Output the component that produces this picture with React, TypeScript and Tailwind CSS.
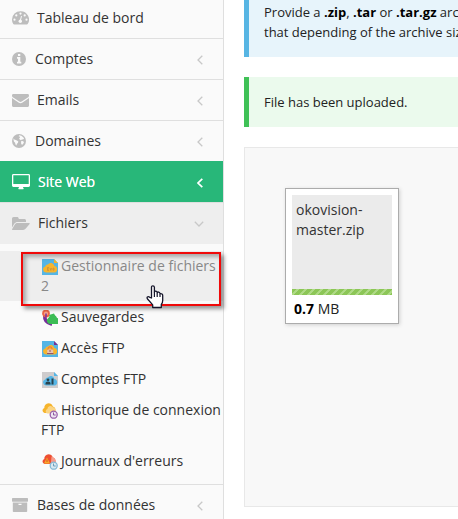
import type { ReactNode } from "react";

const iconClass = "shrink-0 block";

function Gauge() {
  return (
    <svg className={iconClass} width="17" height="14" viewBox="0 0 17 14">
      <path fill="#bdbdbd" d="M8.5.2A8.4 8.4 0 0 0 0 8.5c0 1.700.5 3.200 1.300 4.500.2.300.4.400.7.400h13c.3 0 .5-.1.700-.4A8.300 8.300 0 0 0 8.500.2z" />
      <g fill="#fafafa">
        <circle cx="2.500" cy="8.700" r="1.100" /><circle cx="4.300" cy="4.400" r="1.100" />
        <circle cx="8.500" cy="2.600" r="1.100" /><circle cx="12.700" cy="4.400" r="1.100" />
        <circle cx="14.500" cy="8.700" r="1.100" /><circle cx="8.300" cy="10.300" r="1.700" />
      </g>
      <path d="M8.400 9.500l1-4.100" stroke="#fafafa" strokeWidth="1" strokeLinecap="round" />
    </svg>
  );
}
function Info() {
  return (
    <svg className={iconClass} width="14" height="14" viewBox="0 0 14 14">
      <circle cx="7" cy="7" r="7" fill="#bdbdbd" />
      <path fill="#fafafa" d="M6 2h2.300v2H6zM5 5h3.300v4.800h1V11.500H5V9.800h1V6.700H5z" />
    </svg>
  );
}
function Mail() {
  return (
    <svg className={iconClass} width="17" height="13" viewBox="0 0 17 13">
      <path fill="#bdbdbd" d="M0 1.400C0 .6.6 0 1.400 0h14.200c.8 0 1.400.6 1.400 1.400 0 .9-.5 1.600-1.200 2.100L9.700 7.600c-.8.5-1.600.5-2.400 0L1.200 3.500C.5 3 0 2.300 0 1.400zM0 4c2 1.600 4.300 3.100 6.500 4.600 1.300.9 2.700.9 4 0C12.700 7.100 15 5.600 17 4v7.500c0 .8-.7 1.500-1.500 1.500h-14C.7 13 0 12.300 0 11.500z" />
    </svg>
  );
}
function Globe() {
  return (
    <svg className={iconClass} width="14" height="14" viewBox="0 0 14 14">
      <circle cx="7" cy="7" r="7" fill="#bdbdbd" />
      <path fill="#fafafa" d="M7.300 1.200l2 .5 1.900 1.500.9 1.400-1 1-1.300-.2-.8.900-1.300-.7-.6-1.300 1-.8-.5-.9-1-.3z" />
      <path fill="#fafafa" d="M1.300 4.300l1 1.300 1.500.4 1.500.7 1 .9-.3 1.200-1.200 1.100-.3 1.500-1-.9-.4-1.700-1.200-1.200z" />
      <path fill="#fafafa" d="M9 7.300l1.600-.3 1.400 1-.8 1.700-1.200 1.200-.8-1.400z" />
    </svg>
  );
}
function Desktop() {
  return (
    <svg className={iconClass} width="18" height="16" viewBox="0 0 18 16">
      <path fill="#fff" fillRule="evenodd" d="M1.400 0h15.200c.8 0 1.400.6 1.400 1.400v10.200c0 .8-.6 1.400-1.400 1.400H11c0 .8.700 1.100.7 1.700 0 .3-.2.500-.5.500H6.800c-.3 0-.5-.2-.5-.5 0-.6.700-.9.700-1.700H1.400C.6 13 0 12.400 0 11.600V1.400C0 .6.6 0 1.400 0zM1.300 1.300V10h15.400V1.300z" />
    </svg>
  );
}
function FolderOpen() {
  return (
    <svg className={iconClass} width="18" height="13" viewBox="0 0 18 13">
      <path fill="#bdbdbd" d="M0 10.500V1.700C0 .8.700 0 1.700 0h3.400c.9 0 1.600.7 1.600 1.600v.5h5.700c.9 0 1.600.7 1.600 1.600V5H5.500c-1.100 0-2.400.6-3.100 1.500z" />
      <path fill="#bdbdbd" d="M5.500 6h11.600c.6 0 .9.500.5 1l-3.800 4.600c-.6.800-1.700 1.400-2.700 1.400H.8c-.7 0-1-.5-.6-1L3 7.300C3.600 6.500 4.700 6 5.500 6z" />
    </svg>
  );
}
function Archive() {
  return (
    <svg className={iconClass} width="16" height="14" viewBox="0 0 16 14">
      <rect width="16" height="3.700" rx=".6" fill="#bdbdbd" />
      <path fill="#bdbdbd" fillRule="evenodd" d="M.8 4.500h14.400v8.700c0 .5-.3.800-.8.800H1.600c-.5 0-.8-.3-.8-.8zM6.500 5.800v1.100h3V5.800z" />
    </svg>
  );
}

function Chevron({ color = "#c8c8c8", down = false }: { color?: string; down?: boolean }) {
  return down ? (
    <svg className="mr-[19px] mt-[2px] block" width="10" height="6" viewBox="0 0 10 6" fill="none">
      <path d="M.8.8L5 5 9.200.8" stroke={color} strokeWidth="1.300" />
    </svg>
  ) : (
    <svg className="mr-[20px] mt-[2px] block" width="6" height="10" viewBox="0 0 6 10" fill="none">
      <path d="M5.300.8L1 5l4.300 4.200" stroke={color} strokeWidth={color === "#fff" ? "1.700" : "1.300"} />
    </svg>
  );
}

type RowProps = { icon: ReactNode; label: string; tone?: string; gap?: string; chevron?: ReactNode };
function Row({ icon, label, tone = "bg-[#fafafa] border-[#dfdfdf] text-[#333]", gap = "gap-[8px]", chevron = <Chevron /> }: RowProps) {
  return (
    <div className={`flex h-[41px] shrink-0 items-center border-b pl-[12px] ${tone}`}>
      <div className={`flex flex-1 items-center ${gap}`}>
        {icon}
        <span className="leading-5">{label}</span>
      </div>
      {chevron}
    </div>
  );
}

const smallIcon = "mr-[3px] inline-block align-[-4px]";

function CloudFile({ bg, cloud, corner, kind }: { bg: string; cloud: string; corner: string; kind: "evo" | "lock" | "user" }) {
  return (
    <svg className={smallIcon} width="16" height="16" viewBox="0 0 16 16">
      <path fill={bg} d="M0 0h12l4 4v12H0z" />
      <path fill={corner} d="M12 0l4 4h-4z" />
      <path fill={cloud} d="M4 13.500a3 3 0 0 1-.7-5.900A2.500 2.500 0 0 1 5.800 5.500 3.600 3.600 0 0 1 12.300 7a3.300 3.300 0 0 1 .2 6.500z" />
      {kind === "evo" && <path d="M5.500 8.500v3M5.500 8.500H7M5.500 10H7M5.500 11.500H7M8 9l.8 2.400L9.600 9M11 9.200h1v1.900h-1z" fill="none" stroke="#ca913b" strokeWidth=".8" />}
      {kind === "lock" && <><path d="M6 9V7.800a2 2 0 0 1 4 0V9" fill="none" stroke="#e66b4c" /><rect x="5.200" y="8.400" width="6" height="4" rx="1" fill="#e6c3b1" /><path d="M5 12.500h6.500M8 9v2" stroke="#9b5260" /></>}
      {kind === "user" && <><circle cx="6" cy="7.800" r="1.400" fill="#29434e" /><path d="M3.500 12.500V11q0-1.600 2.500-1.600T8.500 11v1.500zM9.500 6.500h2v6h-2z" fill="#29434e" /></>}
    </svg>
  );
}
function BackupIcon() {
  return (
    <svg className={smallIcon} width="16" height="16" viewBox="0 0 16 16">
      <path d="M2.800 5.500q-.8 7 7.200 8.700" stroke="#77309a" strokeWidth="3.500" fill="none" />
      <circle cx="4" cy="3.500" r="3" fill="#f7a18b" stroke="#ed6548" strokeWidth="1.800" />
      <path d="M4 3.500v4" stroke="#77309a" strokeWidth="1.500" />
      <path fill="#3cbc55" d="M8.300 14a3.300 3.300 0 0 1-2-6 3 3 0 0 1 2.500-1.800A3.700 3.700 0 0 1 15 8a3 3 0 0 1-.3 6z" />
      <path d="M7 5l5-1.500L14.500 8H8z" fill="#3cbc55" />
    </svg>
  );
}
function CloudClock({ error = false }: { error?: boolean }) {
  return (
    <svg className={smallIcon} width="16" height="16" viewBox="0 0 16 16">
      <path fill={error ? "#ee4f31" : "#f6b42b"} d="M2.500 10A2.600 2.600 0 0 1 2.300 5 4.300 4.300 0 0 1 6.500.3q3.200 0 4.300 3.200A3.600 3.600 0 0 1 13.500 7v3z" />
      {error
        ? <><path fill="#f7a929" d="M5 3.500l3 6H2z" /><path d="M5 5.500v2.500" stroke="#d74a26" /><path fill="#f69b8b" d="M9.500 2.500q4 1 4 4.500v3H8.800z" /></>
        : <path fill="#fbd585" d="M5 10.500a2.500 2.500 0 0 1 .4-4.600A3 3 0 0 1 10.500 4q3 .5 3 4v2.500z" />}
      <circle cx="11.700" cy="11.700" r="3.500" fill={error ? "#d8e8f1" : "#eee5f1"} stroke={error ? "#85b9d6" : "#9a60ac"} strokeWidth="1.300" />
      <path d="M11.500 9.500V12h2.200" fill="none" stroke={error ? "#6c9db9" : "#8b549e"} />
    </svg>
  );
}

function SubItem({ icon, children, active = false }: { icon: ReactNode; children: ReactNode; active?: boolean }) {
  return (
    <li className={`mb-px pt-[5px] pb-[5px] pl-[42px] leading-5 whitespace-nowrap ${active ? "bg-[#eee] text-[#888]" : "text-[#333]"}`}>
      <div className="h-5">{icon}{Array.isArray(children) ? children[0] : children}</div>
      {Array.isArray(children) && <div className="-ml-px h-5">{children[1]}</div>}
    </li>
  );
}

export default function App() {
  return (
    <div className="relative flex h-[519px] w-[458px] overflow-hidden bg-white font-['Open_Sans',sans-serif] text-sm">
      <aside className="-mt-[2px] flex w-[224px] shrink-0 flex-col border-r border-[#dfdfdf] bg-[#fafafa]">
        <Row icon={<Gauge />} label="Tableau de bord" chevron={null} />
        <Row icon={<Info />} label="Comptes" gap="gap-[9px]" />
        <Row icon={<Mail />} label="Emails" />
        <Row icon={<Globe />} label="Domaines" gap="gap-[9px]" tone="bg-[#fafafa] border-[#28b779] text-[#333]" />
        <Row icon={<Desktop />} label="Site Web" tone="bg-[#28b779] border-[#dfdfdf] text-white [text-shadow:0_0_0.5px_#fff]" chevron={<Chevron color="#fff" />} />
        <Row icon={<FolderOpen />} label="Fichiers" tone="bg-[#eee] border-[#eee] text-[#333]" chevron={<Chevron down />} />
        <ul className="h-[241px] shrink-0 border-b border-[#dfdfdf] pt-[7px]">
          <SubItem active icon={<CloudFile bg="#55b5e5" cloud="#f7b42c" corner="#f7b42c" kind="evo" />}>{"Gestionnaire de fichiers"}{"2"}</SubItem>
          <SubItem icon={<BackupIcon />}>Sauvegardes</SubItem>
          <SubItem icon={<CloudFile bg="#55b5e5" cloud="#f7b42c" corner="#753494" kind="lock" />}>Accès FTP</SubItem>
          <SubItem icon={<CloudFile bg="#cecccd" cloud="#55b5e5" corner="#55b5e5" kind="user" />}>Comptes FTP</SubItem>
          <SubItem icon={<CloudClock />}>{"Historique de connexion"}{"FTP"}</SubItem>
          <SubItem icon={<CloudClock error />}>Journaux d'erreurs</SubItem>
        </ul>
        <Row icon={<Archive />} label="Bases de données" gap="gap-[9px]" />
      </aside>

      <main className="flex flex-1 flex-col pl-[20px] text-[13px] leading-5 text-[#222]">
        <div className="h-[57px] shrink-0 overflow-hidden border-l-[5px] border-[#57b5e3] bg-[#e7f4fb] pt-[2px] pl-[15px] whitespace-nowrap">
          <p>Provide a <b className="font-bold text-black">.zip</b>, <b className="font-bold text-black">.tar</b> or <b className="font-bold text-black">.tar.gz</b> archive</p>
          <p>that depending of the archive size</p>
        </div>
        <div className="mt-[20px] flex h-[50px] shrink-0 items-center border-l-[5px] border-[#3fc156] bg-[#ebfaed] pl-[15px]">File has been uploaded.</div>
        <div className="mt-[20px] h-[360px] shrink-0 border-y border-l border-[#e8e8e8] bg-[#f8f8f8] pt-[40px] pl-[40px] text-sm">
          <div className="h-[136px] w-[114px] border border-[#acacac] bg-white p-[6px] shadow-[1px_1px_4px_rgba(0,0,0,0.16)]">
            <div className="flex h-[100px] w-[100px] flex-col justify-between bg-[#ebebeb] text-[#333]">
              <p className="pt-[5px] pl-[4px] leading-5">okovision-<br />master.zip</p>
              <div className="h-[6px] bg-[repeating-linear-gradient(135deg,#8cc657_0px,#8cc657_3px,#afda87_3.6px,#afda87_5px,#8cc657_5.66px)]" />
            </div>
            <p className="mt-[4px] pl-[2px] leading-5"><b className="font-bold text-black">0.7</b> MB</p>
          </div>
        </div>
      </main>

      <div className="absolute top-[252px] left-[21px] h-[54px] w-[200px] border-2 border-[#f00909] shadow-[3px_3px_4px_rgba(0,0,0,0.4),inset_3px_3px_4px_rgba(0,0,0,0.3)]" />
      <svg className="absolute top-[285px] left-[146px]" width="18" height="24" viewBox="0 0 18 24">
        <path fill="#fff" stroke="#15152a" strokeWidth="1.300" strokeLinejoin="round" d="M5.500 13V2.300q0-1.500 1.400-1.500t1.500 1.500V7q.3-1 1.500-.8 1.200.2 1.300 1.400.5-.8 1.500-.5 1.200.3 1.300 1.600 2.700-.4 2.700 1.800v5q0 2.200-1.400 4v3H6.700v-2.600L1.800 14.300q-1.200-1.600-.4-2.300 1-.9 2.300.3z" />
        <path d="M8.400 7v5M11.200 8v4M14 9v3" stroke="#15152a" strokeWidth="1.200" />
      </svg>
    </div>
  );
}
